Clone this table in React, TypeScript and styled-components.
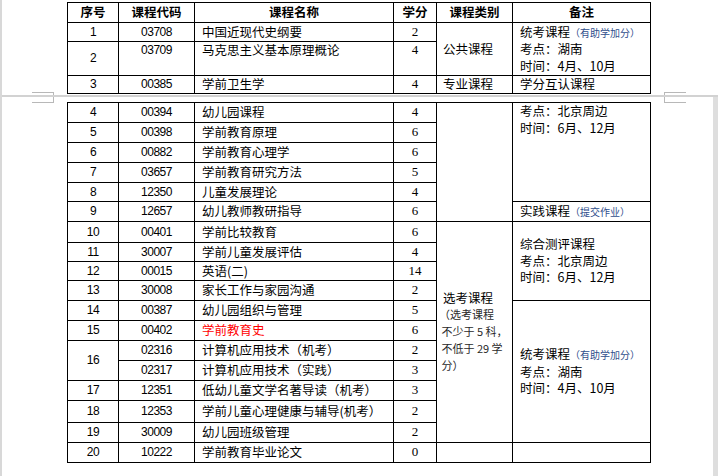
import styled, { createGlobalStyle } from "styled-components";

const Global = createGlobalStyle`
  html, body {
    margin: 0;
    padding: 0;
    background: #ffffff;
  }
  body {
    font-family: "Noto Sans CJK SC", "Liberation Sans", sans-serif;
    color: #000;
  }
`;

const Screen = styled.div`
  position: relative;
  width: 716px;
  height: 476px;
  overflow: hidden;
  border-left: 2px solid #d8d8d8;
  background: #fff;
`;

const Page = styled.div<{ $h: number; $top: number; $edge?: boolean }>`
  position: relative;
  height: ${(p) => p.$h}px;
  padding-top: ${(p) => p.$top}px;
  padding-left: 65px;
  box-sizing: border-box;
  ${(p) => (p.$edge ? "border-right: 5px solid #dedede;" : "")}
`;

const PageGap = styled.div`
  height: 2px;
  background: #d2d2d2;
`;

/* Word 页面角标 */
const CornerMark = styled.div<{ $side: "left" | "right"; $pos: "top" | "bottom" }>`
  position: absolute;
  width: 21px;
  height: ${(p) => (p.$pos === "bottom" ? 2 : 5)}px;
  ${(p) => (p.$side === "left" ? "left: 30px;" : "left: 662px;")}
  ${(p) => (p.$pos === "bottom" ? "bottom: 0;" : "top: 0;")}
  ${(p) => (p.$pos === "bottom" ? "border-top: 1px solid #b8b8b8;" : "border-bottom: 1px solid #b8b8b8;")}
  ${(p) =>
    p.$side === "left" ? "border-right: 1px solid #b8b8b8;" : "border-left: 1px solid #b8b8b8;"}
`;

const Table = styled.table`
  border-collapse: collapse;
  table-layout: fixed;
  width: 583px;
  font-size: 12.5px;
  line-height: 16.5px;
`;

const Row = styled.tr<{ $h: number }>`
  height: ${(p) => p.$h}px;
`;

const Cell = styled.td<{
  $align?: "left" | "center";
  $valign?: "top" | "middle";
  $num?: boolean;
  $serif?: boolean;
  $red?: boolean;
}>`
  border: 1px solid #000;
  padding: 0 ${(p) => (p.$align === "left" ? "6px" : "0")};
  text-align: ${(p) => p.$align ?? "center"};
  vertical-align: ${(p) => p.$valign ?? "middle"};
  white-space: nowrap;
  overflow: hidden;
  color: ${(p) => (p.$red ? "#ff0000" : "#000")};
  ${(p) =>
    p.$num ? `font-family: "Liberation Sans", sans-serif; font-size: 12px; letter-spacing: -0.5px;` : ""}
  ${(p) => (p.$serif ? `font-family: "Liberation Serif", serif; font-size: 13px;` : "")}
`;

const Head = styled.th`
  border: 1px solid #000;
  padding: 0;
  font-weight: 700;
  font-size: 12.5px;
  text-align: center;
  vertical-align: middle;
`;

const NameCell = styled(Cell)`
  padding-left: 7px;
`;

const NoteCell = styled(Cell)`
  padding-left: 7px;
`;

const Hint = styled.span`
  font-size: 10px;
  color: #2f4e8c;
`;

const Elective = styled.div`
  white-space: normal;
  font-size: 12.5px;
`;

const ElectiveNote = styled.div`
  font-size: 11px;
  color: #2a2a2a;
  line-height: 17px;
  margin-left: -4px;
`;

const cols = [51, 76, 199, 43, 76, 138];

const Cols = () => (
  <colgroup>
    {cols.map((w, i) => (
      <col key={i} style={{ width: w }} />
    ))}
  </colgroup>
);

export default function App() {
  return (
    <Screen>
      <Global />
      <Page $h={95} $top={2}>
        <Table>
          <Cols />
          <thead>
            <Row $h={20}>
              <Head>序号</Head>
              <Head>课程代码</Head>
              <Head>课程名称</Head>
              <Head>学分</Head>
              <Head>课程类别</Head>
              <Head>备注</Head>
            </Row>
          </thead>
          <tbody>
            <Row $h={19}>
              <Cell $num>1</Cell>
              <Cell $num>03708</Cell>
              <NameCell $align="left">中国近现代史纲要</NameCell>
              <Cell $serif>2</Cell>
              <Cell $align="left" rowSpan={2}>
                公共课程
              </Cell>
              <NoteCell $align="left" rowSpan={2}>
                统考课程<Hint>（有助学加分）</Hint>
                <br />
                考点：湖南
                <br />
                时间：4月、10月
              </NoteCell>
            </Row>
            <Row $h={34}>
              <Cell $num>2</Cell>
              <Cell $num $valign="top">
                03709
              </Cell>
              <NameCell $align="left" $valign="top">
                马克思主义基本原理概论
              </NameCell>
              <Cell $serif $valign="top">
                4
              </Cell>
            </Row>
            <Row $h={18}>
              <Cell $num>3</Cell>
              <Cell $num>00385</Cell>
              <NameCell $align="left">学前卫生学</NameCell>
              <Cell $serif>4</Cell>
              <Cell $align="left">专业课程</Cell>
              <NoteCell $align="left">学分互认课程</NoteCell>
            </Row>
          </tbody>
        </Table>
        <CornerMark $side="left" $pos="bottom" />
        <CornerMark $side="right" $pos="bottom" />
      </Page>
      <PageGap />
      <Page $h={379} $top={5} $edge>
        <CornerMark $side="left" $pos="top" />
        <CornerMark $side="right" $pos="top" />
        <Table>
          <Cols />
          <tbody>
            <Row $h={20}>
              <Cell $num>4</Cell>
              <Cell $num>00394</Cell>
              <NameCell $align="left">幼儿园课程</NameCell>
              <Cell $serif>4</Cell>
              <Cell rowSpan={6} />
              <NoteCell $align="left" $valign="top" rowSpan={5}>
                考点：北京周边
                <br />
                时间：6月、12月
              </NoteCell>
            </Row>
            <Row $h={20}>
              <Cell $num>5</Cell>
              <Cell $num>00398</Cell>
              <NameCell $align="left">学前教育原理</NameCell>
              <Cell $serif>6</Cell>
            </Row>
            <Row $h={20}>
              <Cell $num>6</Cell>
              <Cell $num>00882</Cell>
              <NameCell $align="left">学前教育心理学</NameCell>
              <Cell $serif>6</Cell>
            </Row>
            <Row $h={20}>
              <Cell $num>7</Cell>
              <Cell $num>03657</Cell>
              <NameCell $align="left">学前教育研究方法</NameCell>
              <Cell $serif>5</Cell>
            </Row>
            <Row $h={19}>
              <Cell $num>8</Cell>
              <Cell $num>12350</Cell>
              <NameCell $align="left">儿童发展理论</NameCell>
              <Cell $serif>4</Cell>
            </Row>
            <Row $h={20}>
              <Cell $num>9</Cell>
              <Cell $num>12657</Cell>
              <NameCell $align="left">幼儿教师教研指导</NameCell>
              <Cell $serif>6</Cell>
              <NoteCell $align="left">
                实践课程<Hint>（提交作业）</Hint>
              </NoteCell>
            </Row>
            <Row $h={21}>
              <Cell $num>10</Cell>
              <Cell $num>00401</Cell>
              <NameCell $align="left">学前比较教育</NameCell>
              <Cell $serif>6</Cell>
              <Cell $align="left" rowSpan={11}>
                <Elective>选考课程</Elective>
                <ElectiveNote>
                  （选考课程
                  <br />
                  &nbsp;不少于 5 科，
                  <br />
                  &nbsp;不低于 29 学
                  <br />
                  &nbsp;分）
                </ElectiveNote>
              </Cell>
              <NoteCell $align="left" rowSpan={4}>
                综合测评课程
                <br />
                考点：北京周边
                <br />
                时间：6月、12月
              </NoteCell>
            </Row>
            <Row $h={19}>
              <Cell $num>11</Cell>
              <Cell $num>30007</Cell>
              <NameCell $align="left">学前儿童发展评估</NameCell>
              <Cell $serif>4</Cell>
            </Row>
            <Row $h={19}>
              <Cell $num>12</Cell>
              <Cell $num>00015</Cell>
              <NameCell $align="left">英语(二)</NameCell>
              <Cell $serif>14</Cell>
            </Row>
            <Row $h={20}>
              <Cell $num>13</Cell>
              <Cell $num>30008</Cell>
              <NameCell $align="left">家长工作与家园沟通</NameCell>
              <Cell $serif>2</Cell>
            </Row>
            <Row $h={20}>
              <Cell $num>14</Cell>
              <Cell $num>00387</Cell>
              <NameCell $align="left">幼儿园组织与管理</NameCell>
              <Cell $serif>5</Cell>
              <NoteCell $align="left" rowSpan={7}>
                统考课程<Hint>（有助学加分）</Hint>
                <br />
                考点：湖南
                <br />
                时间：4月、10月
              </NoteCell>
            </Row>
            <Row $h={20}>
              <Cell $num>15</Cell>
              <Cell $num>00402</Cell>
              <NameCell $align="left" $red>
                学前教育史
              </NameCell>
              <Cell $serif>6</Cell>
            </Row>
            <Row $h={20}>
              <Cell $num rowSpan={2}>
                16
              </Cell>
              <Cell $num>02316</Cell>
              <NameCell $align="left">计算机应用技术（机考）</NameCell>
              <Cell $serif>2</Cell>
            </Row>
            <Row $h={20}>
              <Cell $num>02317</Cell>
              <NameCell $align="left">计算机应用技术（实践）</NameCell>
              <Cell $serif>3</Cell>
            </Row>
            <Row $h={20}>
              <Cell $num>17</Cell>
              <Cell $num>12351</Cell>
              <NameCell $align="left">低幼儿童文学名著导读（机考）</NameCell>
              <Cell $serif>3</Cell>
            </Row>
            <Row $h={22}>
              <Cell $num>18</Cell>
              <Cell $num>12353</Cell>
              <NameCell $align="left">学前儿童心理健康与辅导(机考）</NameCell>
              <Cell $serif>2</Cell>
            </Row>
            <Row $h={20}>
              <Cell $num>19</Cell>
              <Cell $num>30009</Cell>
              <NameCell $align="left">幼儿园班级管理</NameCell>
              <Cell $serif>2</Cell>
            </Row>
            <Row $h={20}>
              <Cell $num>20</Cell>
              <Cell $num>10222</Cell>
              <NameCell $align="left">学前教育毕业论文</NameCell>
              <Cell $serif>0</Cell>
              <Cell />
              <Cell />
            </Row>
          </tbody>
        </Table>
      </Page>
    </Screen>
  );
}
